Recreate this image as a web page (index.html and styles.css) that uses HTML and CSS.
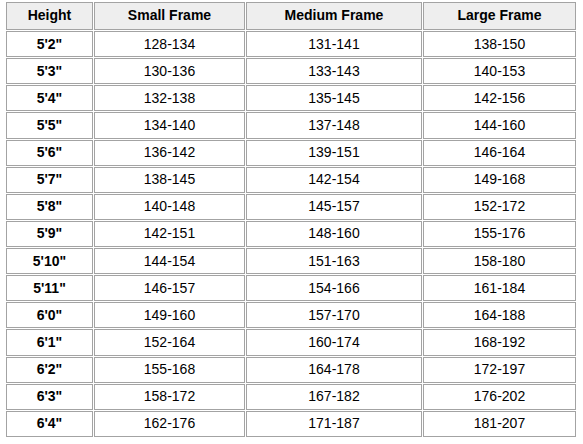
FILE: index.html
```html
<!DOCTYPE html>
<html>
<head>
<meta charset="utf-8">
<link rel="stylesheet" href="styles.css">
</head>
<body>
<table class="chart">
<colgroup><col class="c1"><col class="c2"><col class="c3"><col class="c4"></colgroup>
<thead>
<tr class="head"><th>Height</th><th>Small Frame</th><th>Medium Frame</th><th>Large Frame</th></tr>
</thead>
<tbody>
<tr><th>5'2"</th><td>128-134</td><td>131-141</td><td>138-150</td></tr>
<tr><th>5'3"</th><td>130-136</td><td>133-143</td><td>140-153</td></tr>
<tr><th>5'4"</th><td>132-138</td><td>135-145</td><td>142-156</td></tr>
<tr><th>5'5"</th><td>134-140</td><td>137-148</td><td>144-160</td></tr>
<tr><th>5'6"</th><td>136-142</td><td>139-151</td><td>146-164</td></tr>
<tr><th>5'7"</th><td>138-145</td><td>142-154</td><td>149-168</td></tr>
<tr><th>5'8"</th><td>140-148</td><td>145-157</td><td>152-172</td></tr>
<tr><th>5'9"</th><td>142-151</td><td>148-160</td><td>155-176</td></tr>
<tr><th>5'10"</th><td>144-154</td><td>151-163</td><td>158-180</td></tr>
<tr><th>5'11"</th><td>146-157</td><td>154-166</td><td>161-184</td></tr>
<tr><th>6'0"</th><td>149-160</td><td>157-170</td><td>164-188</td></tr>
<tr><th>6'1"</th><td>152-164</td><td>160-174</td><td>168-192</td></tr>
<tr><th>6'2"</th><td>155-168</td><td>164-178</td><td>172-197</td></tr>
<tr><th>6'3"</th><td>158-172</td><td>167-182</td><td>176-202</td></tr>
<tr><th>6'4"</th><td>162-176</td><td>171-187</td><td>181-207</td></tr>
</tbody>
</table>
</body>
</html>
```
FILE: styles.css
```css
html, body {
  margin: 0;
  padding: 0;
  background: #ffffff;
}
.chart {
  margin: 1px 0 0 5px;
  border-collapse: separate;
  border-spacing: 1px;
  table-layout: fixed;
  width: 572px;
  font-family: "Liberation Sans", Arial, sans-serif;
  font-size: 14px;
  color: #000;
}
.c1 { width: 87px; }
.c2 { width: 151px; }
.c3 { width: 176px; }
.c4 { width: 153px; }
.chart th, .chart td {
  border: 1px solid #a3a3a3;
  padding: 0 0 1px 0;
  text-align: center;
  vertical-align: middle;
  box-sizing: border-box;
}
.chart th {
  font-weight: bold;
}
.chart td {
  font-weight: normal;
}
.head th {
  background: #eeeeee;
  padding-bottom: 2px;
}
.head {
  height: 28px;
}
tbody tr {
  height: 26.14px;
}
```
